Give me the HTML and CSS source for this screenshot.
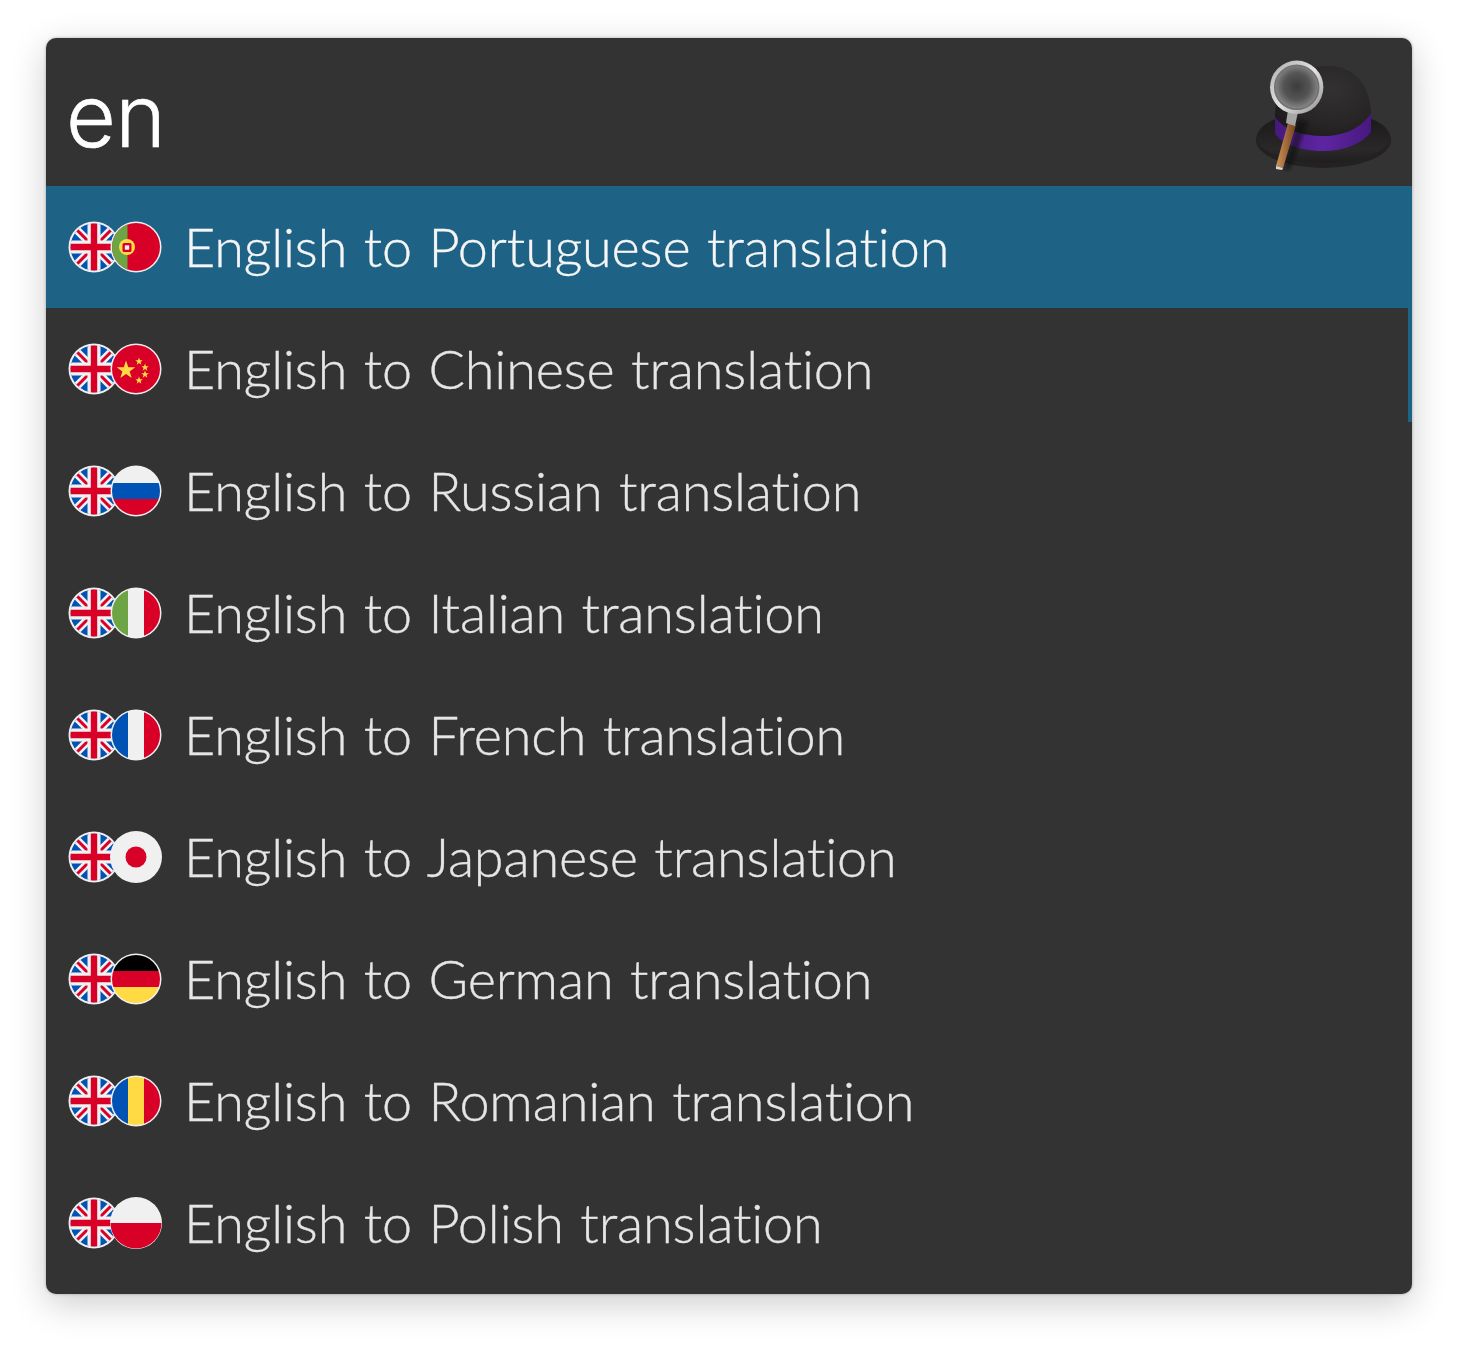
FILE: index.html
```html
<!DOCTYPE html>
<html lang="en">
<head>
<meta charset="utf-8">
<title>Translation workflow</title>
<link rel="stylesheet" href="styles.css">
</head>
<body>
<svg class="defs" width="0" height="0" aria-hidden="true">
  <defs>
    <clipPath id="cl"><circle cx="26" cy="26" r="23.500"/></clipPath>
    <clipPath id="cr"><circle cx="68" cy="26" r="24"/></clipPath>
    <symbol id="uk" viewBox="0 0 52 52">
      <circle cx="26" cy="26" r="25.500" fill="#f0f0f0"/>
      <g clip-path="url(#cl)">
        <rect x="0" y="0" width="52" height="52" fill="#0052b4"/>
        <path d="M0 0L52 52M52 0L0 52" stroke="#f0f0f0" stroke-width="8"/>
        <path d="M9 9L21 21M31 31L43 43M43 9L31 21M9 43L21 31" stroke="#d80027" stroke-width="3"/>
        <path d="M26 0V52M0 26H52" stroke="#f0f0f0" stroke-width="13"/>
        <path d="M26 0V52M0 26H52" stroke="#d80027" stroke-width="6.400"/>
      </g>
    </symbol>
    <symbol id="ring" viewBox="0 0 94 52">
      <circle cx="68" cy="26" r="25.500" fill="#f0f0f0"/>
    </symbol>
    <radialGradient id="crown" cx="0.6" cy="0.3" r="0.8">
      <stop offset="0" stop-color="#333132"/>
      <stop offset="0.6" stop-color="#262425"/>
      <stop offset="1" stop-color="#171516"/>
    </radialGradient>
    <linearGradient id="brim" x1="0" y1="0" x2="0" y2="1">
      <stop offset="0" stop-color="#181617"/>
      <stop offset="0.75" stop-color="#2a2829"/>
      <stop offset="1" stop-color="#1f1d1e"/>
    </linearGradient>
    <linearGradient id="band" x1="0" y1="0" x2="1" y2="0">
      <stop offset="0" stop-color="#45197c"/>
      <stop offset="0.5" stop-color="#5e25a2"/>
      <stop offset="1" stop-color="#47197f"/>
    </linearGradient>
    <radialGradient id="lens" cx="0.5" cy="0.48" r="0.55">
      <stop offset="0" stop-color="#3c3c3c"/>
      <stop offset="0.55" stop-color="#555"/>
      <stop offset="1" stop-color="#929292"/>
    </radialGradient>
    <linearGradient id="rim" x1="0" y1="0" x2="1" y2="1">
      <stop offset="0" stop-color="#a9a9a9"/>
      <stop offset="0.5" stop-color="#e4e4e4"/>
      <stop offset="1" stop-color="#8c8c8c"/>
    </linearGradient>
    <linearGradient id="wood" x1="0" y1="0" x2="1" y2="0">
      <stop offset="0" stop-color="#cf9259"/>
      <stop offset="1" stop-color="#74441e"/>
    </linearGradient>
    <filter id="soft"><feGaussianBlur stdDeviation="1.500"/></filter>
  </defs>
</svg>

<main class="window">
  <header class="search">
    <span class="query">en</span>
    <svg class="hat" viewBox="0 0 140 112" aria-hidden="true">
      <ellipse cx="71.500" cy="80" rx="67.500" ry="28" fill="#232122"/>
      <ellipse cx="71.500" cy="77" rx="66.500" ry="26" fill="url(#brim)"/>
      <path d="M23 60C22 28 38 6 76 6C106 6 119 30 119 56C119 72 98 84 71 84C44 84 24 76 23 60Z" fill="url(#crown)"/>
      <path d="M23 57C32 70 50 76 71 76C92 76 110 68 119 53L119 72C110 84 92 91 71 91C48 91 30 84 23 74Z" fill="url(#band)"/>
      <path d="M32 110L46 60L56 62L38 110Z" fill="#0c0b0b" opacity="0.5" filter="url(#soft)"/>
      <path d="M36 63L44 65L31 108L24 106Z" fill="url(#wood)"/>
      <path d="M24 106L31 108L30 110L24 109Z" fill="#d8d8d8"/>
      <path d="M36 50L46 52L43 66L34 63Z" fill="#a6a6a6"/>
      <circle cx="44.700" cy="27.300" r="26.700" fill="url(#rim)"/>
      <circle cx="44.700" cy="27.300" r="22" fill="url(#lens)" stroke="#717171" stroke-width="1.500"/>
    </svg>
  </header>

  <ul class="results">
    <li class="row selected">
      <svg class="flags" viewBox="0 0 94 52" aria-hidden="true">
        <use href="#uk" width="52" height="52"/>
        <use href="#ring" width="94" height="52"/>
        <g clip-path="url(#cr)">
          <rect x="44" y="0" width="50" height="52" fill="#d80027"/>
          <rect x="44" y="0" width="15.500" height="52" fill="#6da544"/>
        </g>
        <circle cx="59" cy="26" r="8" fill="#ffda44"/>
        <rect x="54.500" y="22" width="9" height="9" rx="1.500" fill="#d80027"/>
        <rect x="56.800" y="24.300" width="4.400" height="4.400" fill="#f0f0f0"/>
      </svg>
      <span class="label">English to Portuguese translation</span>
    </li>
    <li class="row">
      <svg class="flags" viewBox="0 0 94 52" aria-hidden="true">
        <use href="#uk" width="52" height="52"/>
        <use href="#ring" width="94" height="52"/>
        <g clip-path="url(#cr)"><rect x="44" y="0" width="50" height="52" fill="#d80027"/></g>
        <path d="M58 17.500L60.300 24.200H67.300L61.600 28.400L63.800 35.100L58 31L52.300 35.100L54.400 28.400L48.700 24.200H55.800Z" fill="#ffda44"/>
        <path d="M71 14.500L72 17.200H74.800L72.600 19L73.400 21.700L71 20.100L68.700 21.700L69.500 19L67.300 17.200H70Z" fill="#ffda44"/>
        <path d="M77 20.500L78 23.200H80.800L78.600 25L79.400 27.700L77 26.100L74.700 27.700L75.500 25L73.300 23.200H76Z" fill="#ffda44"/>
        <path d="M77 27.500L78 30.200H80.800L78.600 32L79.400 34.700L77 33.100L74.700 34.700L75.500 32L73.300 30.200H76Z" fill="#ffda44"/>
        <path d="M71 33.500L72 36.200H74.800L72.600 38L73.400 40.700L71 39.100L68.700 40.700L69.500 38L67.300 36.200H70Z" fill="#ffda44"/>
      </svg>
      <span class="label">English to Chinese translation</span>
    </li>
    <li class="row">
      <svg class="flags" viewBox="0 0 94 52" aria-hidden="true">
        <use href="#uk" width="52" height="52"/>
        <use href="#ring" width="94" height="52"/>
        <g clip-path="url(#cr)">
          <rect x="44" y="0" width="50" height="18" fill="#f0f0f0"/>
          <rect x="44" y="18" width="50" height="16" fill="#0052b4"/>
          <rect x="44" y="34" width="50" height="18" fill="#d80027"/>
        </g>
      </svg>
      <span class="label">English to Russian translation</span>
    </li>
    <li class="row">
      <svg class="flags" viewBox="0 0 94 52" aria-hidden="true">
        <use href="#uk" width="52" height="52"/>
        <use href="#ring" width="94" height="52"/>
        <g clip-path="url(#cr)">
          <rect x="44" y="0" width="16" height="52" fill="#6da544"/>
          <rect x="60" y="0" width="16" height="52" fill="#f0f0f0"/>
          <rect x="76" y="0" width="18" height="52" fill="#d80027"/>
        </g>
      </svg>
      <span class="label">English to Italian translation</span>
    </li>
    <li class="row">
      <svg class="flags" viewBox="0 0 94 52" aria-hidden="true">
        <use href="#uk" width="52" height="52"/>
        <use href="#ring" width="94" height="52"/>
        <g clip-path="url(#cr)">
          <rect x="44" y="0" width="16" height="52" fill="#0052b4"/>
          <rect x="60" y="0" width="16" height="52" fill="#f0f0f0"/>
          <rect x="76" y="0" width="18" height="52" fill="#d80027"/>
        </g>
      </svg>
      <span class="label">English to French translation</span>
    </li>
    <li class="row">
      <svg class="flags" viewBox="0 0 94 52" aria-hidden="true">
        <use href="#uk" width="52" height="52"/>
        <circle cx="68" cy="26" r="26" fill="#f0f0f0"/>
        <circle cx="68" cy="26" r="10.500" fill="#d80027"/>
      </svg>
      <span class="label">English to Japanese translation</span>
    </li>
    <li class="row">
      <svg class="flags" viewBox="0 0 94 52" aria-hidden="true">
        <use href="#uk" width="52" height="52"/>
        <use href="#ring" width="94" height="52"/>
        <g clip-path="url(#cr)">
          <rect x="44" y="0" width="50" height="18" fill="#000"/>
          <rect x="44" y="18" width="50" height="16" fill="#d80027"/>
          <rect x="44" y="34" width="50" height="18" fill="#ffda44"/>
        </g>
      </svg>
      <span class="label">English to German translation</span>
    </li>
    <li class="row">
      <svg class="flags" viewBox="0 0 94 52" aria-hidden="true">
        <use href="#uk" width="52" height="52"/>
        <use href="#ring" width="94" height="52"/>
        <g clip-path="url(#cr)">
          <rect x="44" y="0" width="16" height="52" fill="#0052b4"/>
          <rect x="60" y="0" width="16" height="52" fill="#ffda44"/>
          <rect x="76" y="0" width="18" height="52" fill="#d80027"/>
        </g>
      </svg>
      <span class="label">English to Romanian translation</span>
    </li>
    <li class="row">
      <svg class="flags" viewBox="0 0 94 52" aria-hidden="true">
        <use href="#uk" width="52" height="52"/>
        <circle cx="68" cy="26" r="26" fill="#f0f0f0"/>
        <path d="M42.500 26H93.500A25.500 25.500 0 0 1 42.500 26Z" fill="#d80027"/>
      </svg>
      <span class="label">English to Polish translation</span>
    </li>
  </ul>
  <div class="scrollbar"></div>
</main>
</body>
</html>
```

FILE: styles.css
```css
html, body {
  margin: 0;
  padding: 0;
  background: #fff;
}

body {
  width: 1458px;
  height: 1348px;
  padding: 38px 46px 0;
  box-sizing: border-box;
  font-family: "Lato", "Liberation Sans", sans-serif;
  font-variant-ligatures: none;
  overflow: hidden;
}

.defs {
  position: absolute;
}

.window {
  position: relative;
  height: 1256px;
  background: #333333;
  border-radius: 10px;
  box-shadow: 0 10px 36px rgba(0, 0, 0, 0.2), 0 0 3px rgba(0, 0, 0, 0.3);
  overflow: hidden;
}

.search {
  height: 148px;
  display: flex;
  align-items: center;
  justify-content: space-between;
  padding: 0 20px 0 20px;
}

.query {
  font-family: "Inter", "Liberation Sans", sans-serif;
  font-size: 86px;
  font-weight: 300;
  line-height: 1;
  letter-spacing: -0.5px;
  padding-top: 8px;
  color: #fff;
  -webkit-text-stroke: 0.6px #fff;
}

.hat {
  width: 140px;
  height: 112px;
  flex: none;
  margin-top: 8px;
}

.results {
  list-style: none;
  margin: 0;
  padding: 0;
}

.row {
  height: 122px;
  display: flex;
  align-items: center;
  gap: 22px;
  padding-left: 22px;
  color: #e6e6e6;
}

.row.selected {
  background: #1e6286;
  color: #f6f6f6;
}

.flags {
  width: 94px;
  height: 52px;
  flex: none;
}

.label {
  font-size: 54px;
  font-weight: 300;
  line-height: 1;
  white-space: nowrap;
  word-spacing: 2px;
  letter-spacing: -0.15px;
  -webkit-text-stroke: 0.35px currentColor;
}

.scrollbar {
  position: absolute;
  top: 270px;
  right: 0;
  width: 4px;
  height: 114px;
  background: #1e6286;
}
```
